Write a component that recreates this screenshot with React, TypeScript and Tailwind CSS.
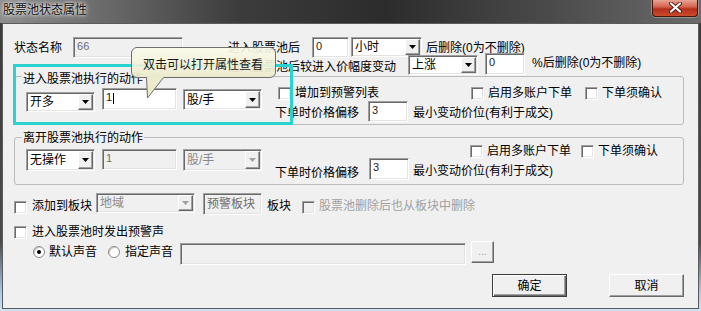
import React from 'react';

// sunken 3D frame used by edits, combos and check boxes
const sunken =
  'border border-t-[#a0a0a0] border-l-[#a0a0a0] border-b-white border-r-white shadow-[inset_1px_1px_0_#696969,inset_-1px_-1px_0_#e3e3e3]';
const raised =
  'border border-t-white border-l-white border-b-[#696969] border-r-[#696969] shadow-[inset_-1px_-1px_0_#a0a0a0] bg-[#f0f0f0]';

function Field({ cls, text, disabled, digits, caret }: { cls: string; text?: string; disabled?: boolean; digits?: boolean; caret?: boolean }) {
  return (
    <div
      className={`${sunken} flex items-start pl-[3px] ${digits ? 'pt-[1px] text-[11px]' : 'pt-[3px]'} ${
        disabled ? 'bg-[#f0f0f0] text-[#6d6d6d]' : 'bg-white text-[#1a1a1a]'
      } ${cls}`}
    >
      {text}
      {caret && <span className="ml-[1px] mt-[3px] w-[1px] h-[11px] bg-black" />}
    </div>
  );
}

function Combo({ cls, text, disabled }: { cls: string; text: string; disabled?: boolean }) {
  return (
    <div className={`${sunken} flex p-[1px] ${disabled ? 'bg-[#f0f0f0] text-[#8a8a8a]' : 'bg-white text-black'} ${cls}`}>
      <div className="flex-1 flex items-center pl-[2px]">{text}</div>
      <div className={`${raised} w-[15px] flex items-center justify-center`}>
        <svg width="7" height="4" viewBox="0 0 7 4">
          <polygon points="0,0 7,0 3.5,4" fill={disabled ? '#a0a0a0' : '#000'} />
        </svg>
      </div>
    </div>
  );
}

function Check({ cls = '', disabled }: { cls?: string; disabled?: boolean }) {
  return <div className={`${sunken} w-[13px] h-[13px] shrink-0 ${disabled ? 'bg-[#f0f0f0]' : 'bg-white'} ${cls}`} />;
}

function CheckLabel({ cls = '', label }: { cls?: string; label: string }) {
  return (
    <div className={`flex items-center ${cls}`}>
      <Check />
      <span className="ml-[4px]">{label}</span>
    </div>
  );
}

function Radio({ cls = '', on }: { cls?: string; on?: boolean }) {
  return (
    <div className={`w-[12px] h-[12px] rounded-full border border-[#8a8a8a] bg-white shadow-[inset_1px_1px_0_#c8c8c8] flex items-center justify-center ${cls}`}>
      {on && <div className="w-[4px] h-[4px] rounded-full bg-black" />}
    </div>
  );
}

function Group({ cls, label, labelCls, children }: { cls: string; label: string; labelCls: string; children: React.ReactNode }) {
  return (
    <div className={`ml-[11px] w-[670px] border border-[#bcbcbc] rounded-[3px] flex flex-col ${cls}`}>
      <span className={`self-start ml-[7px] px-[1px] bg-[#f0f0f0] ${labelCls}`}>{label}</span>
      {children}
    </div>
  );
}

export default function App() {
  return (
    <div className="relative w-[701px] h-[311px] overflow-hidden bg-[linear-gradient(to_bottom,#3a3a3a_0%,#4c4c4c_78%,#a9c9ea_94%,#cfe2f5_100%)] font-['Liberation_Sans','Noto_Sans_CJK_SC',sans-serif] text-[12px] leading-[14px] text-black">
      {/* title bar */}
      <div className="flex items-start h-[23px] bg-[linear-gradient(to_right,#8e8e8e_0%,#6c6c6c_14%,#3c3c3c_34%,#2c2c2c_55%,#4a4a4a_78%,#6a6a6a_100%)]">
        <span className="pl-[3px] pt-[3px] text-[#111] [text-shadow:0_0_6px_#ffffff,0_0_3px_#ffffff]">股票池状态属性</span>
        <div className="ml-auto mr-[3px] w-[46px] h-[17px] rounded-b-[4px] border border-t-0 border-[#4a1208] bg-[linear-gradient(to_bottom,#e8a494_0%,#d66450_42%,#b3301c_56%,#cc4a2c_100%)] shadow-[0_0_0_1px_rgba(255,255,255,0.3)] flex items-start justify-center pt-[2px]">
          <svg width="13" height="11" viewBox="0 0 13 11">
            <path d="M2,1.5 L11,9.5 M11,1.5 L2,9.5" stroke="#5a1a10" strokeWidth="4" strokeLinecap="round" />
            <path d="M2,1.5 L11,9.5 M11,1.5 L2,9.5" stroke="#ffffff" strokeWidth="2.2" strokeLinecap="round" />
          </svg>
        </div>
      </div>

      {/* client area */}
      <div className="ml-[2px] w-[697px] h-[286px] border border-[#5b5b5b] bg-[#f0f0f0] flex flex-col">
        {/* row 1 */}
        <div className="mt-[13px] flex items-start h-[21px] pl-[11px]">
          <span className="mt-[4px]">状态名称</span>
          <Field cls="ml-[11px] w-[110px] h-[21px]" text="66" disabled digits />
          <span className="ml-[45px] mt-[4px]">进入股票池后</span>
          <Field cls="ml-[12px] w-[37px] h-[21px]" text="0" digits />
          <Combo cls="ml-[2px] w-[71px] h-[20px]" text="小时" />
          <span className="ml-[4px] mt-[4px]">后删除(0为不删除)</span>
        </div>

        {/* row 2 */}
        <div className="-mt-[5px] flex items-start h-[22px] pl-[225px]">
          <span className="mt-[7px]">进入股票池后较进入价幅度变动</span>
          <Combo cls="ml-[12px] mt-[2px] w-[70px] h-[20px]" text="上涨" />
          <Field cls="ml-[7px] w-[40px] h-[22px]" text="0" digits />
          <span className="ml-[7px] mt-[3px]">%后删除(0为不删除)</span>
        </div>

        {/* enter group */}
        <Group cls="mt-[1px] h-[49px]" label="进入股票池执行的动作" labelCls="-mt-[5px]">
          <div className="flex items-start">
            <Combo cls="ml-[11px] mt-[6px] w-[69px] h-[20px]" text="开多" />
            <Field cls="ml-[7px] mt-[2px] w-[75px] h-[22px]" text="1" digits caret />
            <Combo cls="ml-[6px] mt-[3px] w-[79px] h-[21px]" text="股/手" />
            <div className="ml-[13px] flex flex-col">
              <div className="flex items-center h-[14px]">
                <CheckLabel cls="ml-[3px] w-[193px]" label="增加到预警列表" />
                <CheckLabel cls="w-[114px]" label="启用多账户下单" />
                <CheckLabel label="下单须确认" />
              </div>
              <div className="mt-[1px] flex items-center h-[21px]">
                <span className="mt-[2px]">下单时价格偏移</span>
                <Field cls="ml-[9px] w-[40px] h-[21px]" text="3" digits />
                <span className="ml-[5px] mt-[2px]">最小变动价位(有利于成交)</span>
              </div>
            </div>
          </div>
        </Group>

        {/* leave group */}
        <Group cls="mt-[12px] h-[48px]" label="离开股票池执行的动作" labelCls="-mt-[7px]">
          <div className="flex items-start">
            <Combo cls="ml-[11px] mt-[4px] w-[69px] h-[22px]" text="无操作" />
            <Field cls="ml-[7px] mt-[4px] w-[75px] h-[21px]" text="1" disabled digits />
            <Combo cls="ml-[6px] mt-[4px] w-[79px] h-[22px]" text="股/手" disabled />
            <div className="ml-[13px] -mt-[1px] flex flex-col">
              <div className="flex items-center h-[14px] pl-[195px]">
                <CheckLabel cls="w-[111px]" label="启用多账户下单" />
                <CheckLabel label="下单须确认" />
              </div>
              <div className="flex items-start h-[22px]">
                <span className="mt-[8px]">下单时价格偏移</span>
                <Field cls="ml-[10px] w-[40px] h-[22px]" text="3" digits />
                <span className="ml-[4px] mt-[6px]">最小变动价位(有利于成交)</span>
              </div>
            </div>
          </div>
        </Group>

        {/* add to block */}
        <div className="mt-[8px] flex items-start h-[22px] pl-[11px]">
          <Check cls="mt-[8px]" />
          <span className="ml-[5px] mt-[6px]">添加到板块</span>
          <Combo cls="ml-[4px] w-[99px] h-[20px]" text="地域" disabled />
          <Field cls="ml-[8px] w-[59px] h-[22px]" text="预警板块" disabled />
          <span className="ml-[5px] mt-[6px]">板块</span>
          <Check cls="ml-[11px] mt-[8px]" disabled />
          <span className="ml-[4px] mt-[6px] text-[#a0a0a0]">股票池删除后也从板块中删除</span>
        </div>

        {/* alert sound */}
        <div className="mt-[10px] flex items-center h-[14px] pl-[11px]">
          <Check />
          <span className="ml-[5px]">进入股票池时发出预警声</span>
        </div>

        <div className="mt-[2px] flex items-start h-[24px] pl-[30px]">
          <Radio cls="mt-[5px]" on />
          <span className="ml-[4px] mt-[4px]">默认声音</span>
          <Radio cls="ml-[11px] mt-[5px]" />
          <span className="ml-[5px] mt-[4px]">指定声音</span>
          <Field cls="ml-[7px] mt-[2px] w-[286px] h-[22px]" disabled />
          <div className={`${raised} ml-[5px] w-[23px] h-[22px] flex items-center justify-center text-[#a0a0a0] text-[10px]`}>...</div>
        </div>

        {/* buttons */}
        <div className="mt-[9px] flex pl-[489px]">
          <div className="w-[75px] h-[23px] border border-[#3c3c3c] bg-[#f0f0f0] shadow-[inset_1px_1px_0_#ffffff,inset_-1px_-1px_0_#696969,inset_-2px_-2px_0_#a0a0a0] flex items-center justify-center">确定</div>
          <div className={`${raised} ml-[42px] w-[75px] h-[23px] flex items-center justify-center`}>取消</div>
        </div>
      </div>

      {/* cyan highlight */}
      <div className="absolute left-[13px] top-[64px] w-[280px] h-[61px] border-[3px] border-[#2bd2d2]" />

      {/* balloon tooltip, slightly see-through like the original */}
      <div className="absolute left-[131px] top-[47px] w-[145px] h-[31px] rounded-[6px] border border-[#6e6e6e] bg-[linear-gradient(to_bottom,rgba(251,251,234,0.9),rgba(236,235,204,0.92))] pl-[11px] pt-[10px] text-[#1a1a1a]">
        双击可以打开属性查看
      </div>
      <svg className="absolute left-[144px] top-[77px]" width="22" height="22" viewBox="0 0 22 22">
        <polygon points="2,0 3.5,21 20,0" fill="#ecebcc" />
        <path d="M2.5,0 L3.5,21 L19.5,0.5" stroke="#6e6e6e" strokeWidth="1" fill="none" />
      </svg>
    </div>
  );
}
